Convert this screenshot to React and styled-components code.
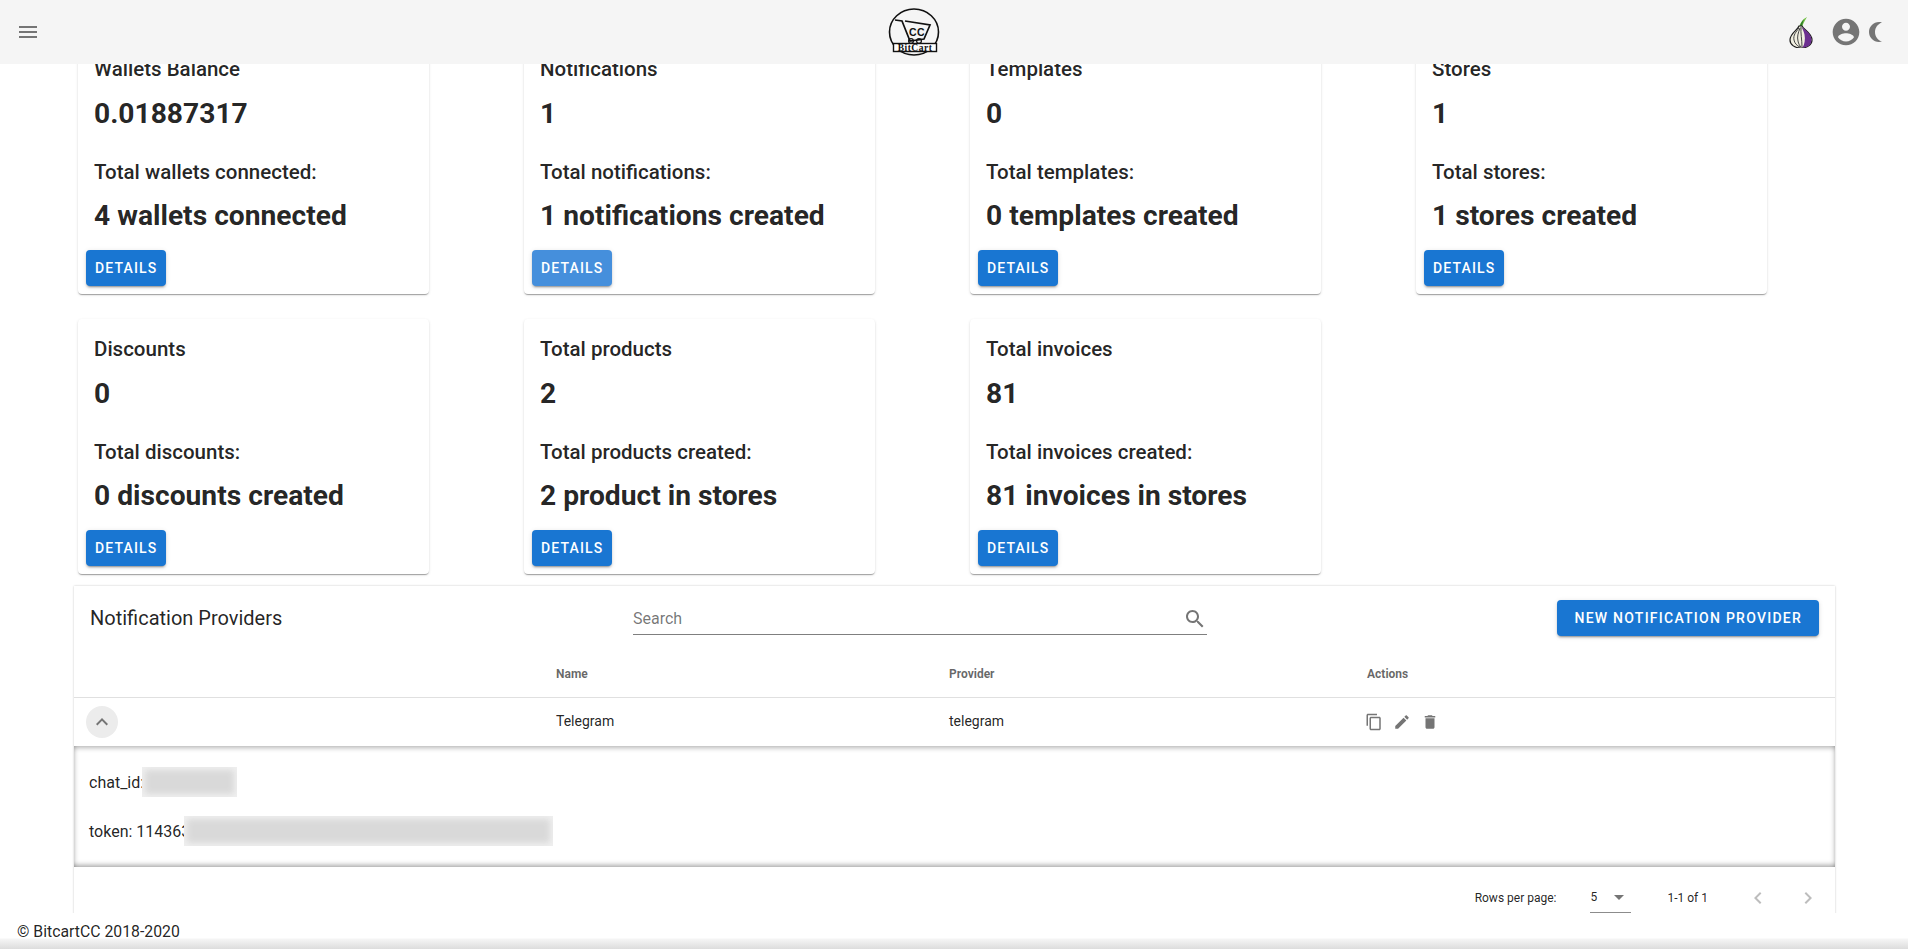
import React from "react";
import styled, { createGlobalStyle } from "styled-components";

const GlobalStyle = createGlobalStyle`
  html, body {
    margin: 0;
    height: 100%;
    background: #fff;
    font-family: Roboto, "Liberation Sans", sans-serif;
    color: rgba(0, 0, 0, 0.87);
  }
  * {
    box-sizing: border-box;
  }
`;

const Icon = ({ d, size = 24, color = "#757575", flip }) => (
  <svg
    width={size}
    height={size}
    viewBox="0 0 24 24"
    fill={color}
    style={flip ? { transform: "scaleX(-1)" } : undefined}
  >
    <path d={d} />
  </svg>
);

const paths = {
  menu: "M3 18h18v-2H3v2zm0-5h18v-2H3v2zm0-7v2h18V6H3z",
  account:
    "M12 2C6.48 2 2 6.48 2 12s4.48 10 10 10 10-4.48 10-10S17.52 2 12 2zm0 3c1.66 0 3 1.34 3 3s-1.34 3-3 3-3-1.34-3-3 1.34-3 3-3zm0 14.2c-2.5 0-4.71-1.28-6-3.22.03-1.99 4-3.08 6-3.08 1.99 0 5.97 1.09 6 3.08-1.29 1.94-3.5 3.22-6 3.22z",
  moon: "M9 2c-1.05 0-2.05.16-3 .46 4.06 1.27 7 5.06 7 9.54 0 4.48-2.94 8.27-7 9.54.95.3 1.95.46 3 .46 5.52 0 10-4.48 10-10S14.52 2 9 2z",
  search:
    "M15.5 14h-.79l-.28-.27C15.41 12.59 16 11.11 16 9.5 16 5.91 13.09 3 9.5 3S3 5.91 3 9.5 5.91 16 9.5 16c1.61 0 3.09-.59 4.23-1.57l.27.28v.79l5 4.99L20.49 19l-4.99-5zm-6 0C7.01 14 5 11.99 5 9.5S7.01 5 9.5 5 14 7.01 14 9.5 11.99 14 9.5 14z",
  up: "M12 8l-6 6 1.41 1.41L12 10.83l4.59 4.58L18 14z",
  copy: "M16 1H4c-1.1 0-2 .9-2 2v14h2V3h12V1zm3 4H8c-1.1 0-2 .9-2 2v14c0 1.1.9 2 2 2h11c1.1 0 2-.9 2-2V7c0-1.1-.9-2-2-2zm0 16H8V7h11v14z",
  edit: "M3 17.25V21h3.75L17.81 9.94l-3.75-3.75L3 17.25zM20.71 7.04c.39-.39.39-1.02 0-1.41l-2.34-2.34c-.39-.39-1.02-.39-1.41 0l-1.83 1.83 3.75 3.75 1.83-1.83z",
  trash: "M6 19c0 1.1.9 2 2 2h8c1.1 0 2-.9 2-2V7H6v12zM19 4h-3.5l-1-1h-5l-1 1H5v2h14V4z",
  left: "M15.41 7.41L14 6l-6 6 6 6 1.41-1.41L10.83 12z",
  right: "M10 6L8.59 7.41 13.17 12l-4.58 4.59L10 18l6-6z",
  drop: "M7 10l5 5 5-5z",
};

const Logo = () => (
  <LogoMark width="52" height="50" viewBox="0 0 52 50">
    <ellipse cx="26" cy="25" rx="24.5" ry="23" fill="none" stroke="#111" strokeWidth="1.6" />
    <path d="M7 13l7 1 8 20 14-2 6-14-25-4" fill="none" stroke="#111" strokeWidth="1.7" />
    <circle cx="23" cy="34" r="2.4" fill="none" stroke="#111" strokeWidth="1.2" />
    <circle cx="31" cy="34" r="2.4" fill="none" stroke="#111" strokeWidth="1.2" />
    <text x="29" y="28.5" textAnchor="middle" fontFamily="Liberation Sans" fontWeight="700" fontSize="10.5" letterSpacing="0.4" fill="#111">
      CC
    </text>
    <rect x="5.5" y="36.5" width="43" height="8" fill="#fff" stroke="#111" strokeWidth="1.4" />
    <text x="27" y="43.6" textAnchor="middle" fontFamily="Liberation Serif" fontWeight="700" fontSize="9.5" letterSpacing="0.5" fill="#111">
      BitCart
    </text>
  </LogoMark>
);

const TorOnion = () => (
  <svg width="32" height="32" viewBox="0 0 32 32">
    <path d="M14 11C15 7 18 3 22 1c-2 3-4 7-5 10z" fill="#72c043" />
    <path d="M15 11c0-3 2-6 4-8-1 3-2 6-2 8z" fill="#2f7d2a" />
    <path d="M14 10c-1 4-9 7-9 14 0 5 5 8 11 8 6 0 11-3 11-8 0-7-8-10-10-14z" fill="#f0eee0" stroke="#1d1d1d" strokeWidth="1.2" />
    <path d="M16.5 10.5c2 3 10 6 10 13.5 0 5-4 7.5-9 7.5 2-3 3-8 2-13-.5-3-2-5-3-8z" fill="#6c2f90" />
    <path d="M14 12c-3 4-6 7-5 12 .5 3 3 6 6 7M15 12c-2 5-3 9-2 13 .5 3 2 5 3 6M16 11c-.5 6 1 13 1 20" fill="none" stroke="#444" strokeWidth="1" />
  </svg>
);

const cards = [
  ["Wallets Balance", "0.01887317", "Total wallets connected:", "4 wallets connected"],
  ["Notifications", "1", "Total notifications:", "1 notifications created", true],
  ["Templates", "0", "Total templates:", "0 templates created"],
  ["Stores", "1", "Total stores:", "1 stores created"],
  ["Discounts", "0", "Total discounts:", "0 discounts created"],
  ["Total products", "2", "Total products created:", "2 product in stores"],
  ["Total invoices", "81", "Total invoices created:", "81 invoices in stores"],
];

function App() {
  return (
    <Page>
      <GlobalStyle />
      <AppBar>
        <MenuButton>
          <Icon d={paths.menu} />
        </MenuButton>
        <Logo />
        <BarActions>
          <TorOnion />
          <Icon d={paths.account} size={32} />
          <Icon d={paths.moon} flip />
        </BarActions>
      </AppBar>
      <Main>
        <CardGrid>
          {cards.map(([title, value, label, summary, faded]) => (
            <Card key={title}>
              <CardContent>
                <Title>{title}</Title>
                <Value>{value}</Value>
                <Title $spaced>{label}</Title>
                <Value>{summary}</Value>
              </CardContent>
              <CardActions>
                <BlueButton $faded={faded}>Details</BlueButton>
              </CardActions>
            </Card>
          ))}
        </CardGrid>
        <TablePaper>
          <Toolbar>
            <TableTitle>Notification Providers</TableTitle>
            <SearchField>
              <Placeholder>Search</Placeholder>
              <Icon d={paths.search} />
            </SearchField>
            <BlueButton $wide>New notification provider</BlueButton>
          </Toolbar>
          <HeadRow>
            <span />
            <span>Name</span>
            <span>Provider</span>
            <span>Actions</span>
          </HeadRow>
          <BodyRow>
            <ExpandButton>
              <Icon d={paths.up} />
            </ExpandButton>
            <Cell>Telegram</Cell>
            <Cell>telegram</Cell>
            <ActionIcons>
              <Icon d={paths.copy} size={18} />
              <Icon d={paths.edit} size={18} />
              <Icon d={paths.trash} size={18} />
            </ActionIcons>
          </BodyRow>
          <Detail>
            <DetailLine>
              chat_id:
              <Blurred $width={95} $overlap={2} />
            </DetailLine>
            <DetailLine>
              token: 114363
              <Blurred $width={369} $overlap={6} />
            </DetailLine>
          </Detail>
          <Pagination>
            <span>Rows per page:</span>
            <RowsSelect>
              5
              <Icon d={paths.drop} />
            </RowsSelect>
            <PageCount>1-1 of 1</PageCount>
            <PageArrows>
              <Icon d={paths.left} color="#bdbdbd" />
              <Icon d={paths.right} color="#bdbdbd" />
            </PageArrows>
          </Pagination>
        </TablePaper>
      </Main>
      <Footer>© BitcartCC 2018-2020</Footer>
    </Page>
  );
}

const Page = styled.div`
  height: 100vh;
  display: flex;
  flex-direction: column;
  overflow: hidden;
`;
const AppBar = styled.header`
  height: 64px;
  flex: none;
  display: flex;
  align-items: center;
  justify-content: space-between;
  padding: 0 20px 0 16px;
  background: #f5f5f5;
  position: relative;
  z-index: 2;
`;
const MenuButton = styled.div`
  width: 24px;
  height: 24px;
`;
const LogoMark = styled.svg`
  margin-left: 2px;
`;
const BarActions = styled.div`
  display: flex;
  align-items: center;
  gap: 13px;
  svg:last-child {
    margin-left: -11px;
  }
`;
const Main = styled.main`
  flex: 1;
  min-height: 0;
  overflow: hidden;
`;
const CardGrid = styled.section`
  display: grid;
  grid-template-columns: repeat(4, 351px);
  column-gap: 95px;
  row-gap: 25px;
  margin-top: -25px;
  padding-left: 78px;
`;
const Card = styled.article`
  height: 255px;
  background: #fff;
  border-radius: 4px;
  box-shadow: 0 2px 1px -1px rgba(0, 0, 0, 0.2), 0 1px 1px 0 rgba(0, 0, 0, 0.14),
    0 1px 3px 0 rgba(0, 0, 0, 0.12);
`;
const CardContent = styled.div`
  padding: 16px 16px 4px;
`;
const Title = styled.div`
  font-size: 20.5px;
  font-weight: 500;
  line-height: 28px;
  margin-top: ${(p) => (p.$spaced ? "22px" : "0")};
  margin-bottom: ${(p) => (p.$spaced ? "-1px" : "0")};
`;
const Value = styled.div`
  font-size: 28.2px;
  font-weight: 700;
  line-height: 44px;
  margin-top: 9px;
`;
const CardActions = styled.div`
  padding: 8px;
`;
const BlueButton = styled.button`
  height: 36px;
  padding: 0 ${(p) => (p.$wide ? "17px" : "9px")};
  border: 0;
  border-radius: 4px;
  background: ${(p) => (p.$faded ? "#458fdc" : "#1976d2")};
  color: #fff;
  font-family: inherit;
  font-size: 14px;
  font-weight: 500;
  letter-spacing: ${(p) => (p.$wide ? "1.25px" : "1.15px")};
  text-transform: uppercase;
  justify-self: end;
  box-shadow: 0 3px 1px -2px rgba(0, 0, 0, 0.2), 0 2px 2px 0 rgba(0, 0, 0, 0.14),
    0 1px 5px 0 rgba(0, 0, 0, 0.12);
`;
const TablePaper = styled.section`
  margin: 12px 73px 0 74px;
  background: #fff;
  box-shadow: 0 0 2px rgba(0, 0, 0, 0.22);
`;
const Toolbar = styled.div`
  height: 64px;
  padding: 0 16px;
  display: grid;
  grid-template-columns: 543px 574px 1fr;
  align-items: center;
`;
const TableTitle = styled.h2`
  margin: 0;
  font-size: 20px;
  font-weight: 400;
`;
const SearchField = styled.div`
  height: 32px;
  display: flex;
  align-items: center;
  justify-content: space-between;
  border-bottom: 1px solid rgba(0, 0, 0, 0.5);
  margin-top: 2px;
`;
const Placeholder = styled.span`
  font-size: 16px;
  color: rgba(0, 0, 0, 0.55);
`;
const columns = "482px 393px 418px 1fr";
const HeadRow = styled.div`
  height: 48px;
  display: grid;
  grid-template-columns: ${columns};
  align-items: center;
  font-size: 12px;
  font-weight: 700;
  color: rgba(0, 0, 0, 0.6);
  border-bottom: 1px solid #e0e0e0;
`;
const BodyRow = styled.div`
  height: 48px;
  display: grid;
  grid-template-columns: ${columns};
  align-items: center;
  font-size: 14px;
`;
const Cell = styled.span`
  margin-top: -2px;
`;
const ExpandButton = styled.div`
  width: 32px;
  height: 32px;
  margin-left: 12px;
  border-radius: 50%;
  background: #ececec;
  display: flex;
  align-items: center;
  justify-content: center;
`;
const ActionIcons = styled.div`
  display: flex;
  gap: 10px;
  margin-left: -2px;
`;
const Detail = styled.div`
  height: 121px;
  padding: 24px 16px 23px 15px;
  display: flex;
  flex-direction: column;
  gap: 25px;
  box-shadow: inset 0 5px 5px -3px rgba(0, 0, 0, 0.28), inset 0 -5px 5px -3px rgba(0, 0, 0, 0.34),
    inset 5px 0 5px -4px rgba(0, 0, 0, 0.18), inset -5px 0 5px -4px rgba(0, 0, 0, 0.18);
`;
const DetailLine = styled.div`
  height: 24px;
  display: flex;
  align-items: center;
  font-size: 16px;
`;
const Blurred = styled.span`
  width: ${(p) => p.$width}px;
  height: 30px;
  margin-left: -${(p) => p.$overlap}px;
  background: #d9d9d9;
  box-shadow: inset 0 0 6px 3px #f0f0f0;
`;
const Pagination = styled.div`
  height: 60px;
  display: flex;
  align-items: center;
  justify-content: flex-end;
  padding: 2px 15px 0 0;
  font-size: 12px;
`;
const RowsSelect = styled.div`
  align-self: flex-start;
  width: 41px;
  height: 31px;
  margin: 13px 36px 0 34px;
  display: flex;
  align-items: center;
  justify-content: space-between;
  border-bottom: 1px solid rgba(0, 0, 0, 0.45);
`;
const PageCount = styled.span`
  margin-right: 38px;
`;
const PageArrows = styled.div`
  display: flex;
  gap: 26px;
`;
const Footer = styled.footer`
  height: 36px;
  flex: none;
  padding: 9px 0 0 17px;
  font-size: 15.8px;
  line-height: 20px;
  background: linear-gradient(#fff 25px, #f5f5f5 26px, #dcdcdc 36px);
`;

export default App;
